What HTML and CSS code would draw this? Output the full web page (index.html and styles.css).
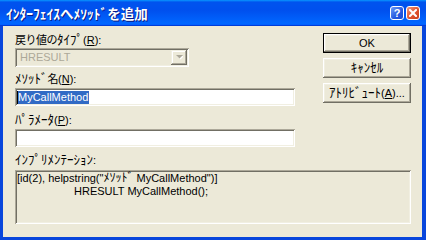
FILE: index.html
```html
<!DOCTYPE html>
<html lang="ja">
<head>
<meta charset="utf-8">
<title>ｲﾝﾀｰﾌｪｲｽへﾒｿｯﾄﾞを追加</title>
<link rel="stylesheet" href="styles.css">
</head>
<body>
<div class="window">
  <div class="titlebar">
    <span class="title">ｲﾝﾀｰﾌｪｲｽへﾒｿｯﾄﾞを追加</span>
    <div class="controls">
      <span class="cbtn help">?</span>
      <span class="cbtn close">
        <svg width="8" height="8" viewBox="0 0 8 8"><path d="M1 1 L7 7 M7 1 L1 7" stroke="#fff" stroke-width="2" stroke-linecap="square"/></svg>
      </span>
    </div>
  </div>
  <div class="client">
    <div class="top">
      <div class="fields">
        <div class="label"><span class="kj">戻り値の</span><span class="hk">ﾀｲﾌﾟ</span>(<u>R</u>):</div>
        <div class="combo sunken">
          <span class="combo-text">HRESULT</span>
          <span class="combo-btn">
            <svg width="7" height="5" viewBox="0 0 7 5"><path d="M1 1 H8 L4.5 4.5 Z" fill="#fff"/><path d="M0 0 H7 L3.5 3.5 Z" fill="#ACA899"/></svg>
          </span>
        </div>
        <div class="label l2"><span class="hk">ﾒｿｯﾄﾞ</span><span class="kj">名</span>(<u>N</u>):</div>
        <div class="edit sunken"><span class="caret"></span><span class="sel">MyCallMethod</span></div>
        <div class="label l3"><span class="hk">ﾊﾟﾗﾒｰﾀ</span>(<u>P</u>):</div>
        <div class="edit sunken"></div>
      </div>
      <div class="buttons">
        <button class="btn default">OK</button>
        <button class="btn"><span class="hk">ｷｬﾝｾﾙ</span></button>
        <button class="btn"><span class="hk">ｱﾄﾘﾋﾞｭｰﾄ</span>(<u>A</u>)...</button>
      </div>
    </div>
    <div class="label l4"><span class="hk">ｲﾝﾌﾟﾘﾒﾝﾃｰｼｮﾝ</span>:</div>
    <div class="impl sunken">
      <div class="line">[id(2), helpstring("<span class="hk2">ﾒｿｯﾄﾞ</span> MyCallMethod")]</div>
      <div class="line indent">HRESULT MyCallMethod();</div>
    </div>
  </div>
</div>
</body>
</html>
```
FILE: styles.css
```css
* { box-sizing: border-box; }
html, body { margin: 0; padding: 0; }
body {
  width: 426px;
  height: 240px;
  overflow: hidden;
  font-family: "Liberation Sans", "Noto Sans CJK JP", sans-serif;
  font-size: 11px;
  color: #000;
}
.window {
  width: 426px;
  height: 240px;
  display: flex;
  flex-direction: column;
  background: #0846DC;
}
.titlebar {
  height: 26px;
  flex: none;
  display: flex;
  align-items: center;
  justify-content: space-between;
  padding: 0 6px 0 6px;
  background: linear-gradient(180deg, #0997ff, #0053ee 8%, #0050ee 40%, #0066ff 88%, #0066ff 93%, #005bff 95%, #003dd7 96%, #003dd7);
}
.title {
  color: #fff;
  font-family: "Noto Sans CJK JP", sans-serif;
  font-weight: bold;
  font-size: 13.5px;
  line-height: 26px;
  text-shadow: 1px 1px #0a1883;
}
.controls { display: flex; gap: 2px; }
.cbtn {
  width: 14px;
  height: 14px;
  border: 1px solid #fff;
  border-radius: 3px;
  display: flex;
  align-items: center;
  justify-content: center;
  color: #fff;
  font-weight: bold;
  font-size: 11px;
  line-height: 12px;
}
.help { background: linear-gradient(135deg, #6d9bf7, #2458e0 60%, #1b4bd0); }
.close { background: linear-gradient(135deg, #f29a7c, #e0532f 55%, #c9401d); }
.client {
  flex: 1;
  margin: 0 4px 3px 3px;
  background: #ECE9D8;
  padding: 7px 11px 0 12px;
}
.top {
  display: grid;
  grid-template-columns: 280px 88px;
  column-gap: 28px;
  align-items: start;
}
.fields { display: flex; flex-direction: column; align-items: flex-start; }
.label { line-height: 13px; height: 13px; white-space: nowrap; }
.hk { font-size: 13px; line-height: 13px; }
.hk2 { font-size: 12px; line-height: 13px; }
.kj { letter-spacing: -0.5px; }
.l2 { margin-top: 5px; }
.l3 { margin-top: 7px; }
.l4 { margin-top: 6px; }
.sunken {
  box-shadow: inset 1px 1px #ACA899, inset -1px -1px #FFFFFF, inset 2px 2px #716F64, inset -2px -2px #F1EFE2;
}
.combo {
  margin-top: 2px;
  width: 174px;
  height: 19px;
  background: #ECE9D8;
  display: flex;
  align-items: center;
  justify-content: space-between;
  padding: 2px;
}
.combo-text { color: #ACA899; padding-left: 3px; line-height: 13px; }
.combo-btn {
  width: 16px;
  height: 15px;
  display: flex;
  align-items: center;
  justify-content: center;
  background: #ECE9D8;
  box-shadow: inset -1px -1px #716F64, inset 1px 1px #F1EFE2, inset -2px -2px #ACA899, inset 2px 2px #FFFFFF;
}
.edit {
  margin-top: 3px;
  width: 280px;
  height: 18px;
  background: #fff;
  padding: 2px 2px 2px 2px;
  display: flex;
  align-items: center;
}
.caret { width: 1px; height: 13px; background: #000; }
.sel {
  background: #316AC5;
  color: #fff;
  line-height: 13px;
  padding-right: 1px;
}
.buttons { display: flex; flex-direction: column; gap: 5px; }
.btn {
  width: 88px;
  height: 20px;
  padding: 0;
  border: none;
  background: #ECE9D8;
  font: inherit;
  color: #000;
  line-height: 13px;
  box-shadow: inset -1px -1px #716F64, inset 1px 1px #FFFFFF, inset -2px -2px #ACA899, inset 2px 2px #F1EFE2;
}
.btn.default {
  box-shadow: inset 0 0 0 1px #000, inset -2px -2px #716F64, inset 2px 2px #FFFFFF, inset -3px -3px #ACA899, inset 3px 3px #F1EFE2;
}
.impl {
  margin-top: 4px;
  width: 396px;
  height: 54px;
  background: #ECE9D8;
  padding: 2px 2px 2px 2px;
}
.line { line-height: 13px; white-space: pre; }
.indent { padding-left: 57px; }
```
